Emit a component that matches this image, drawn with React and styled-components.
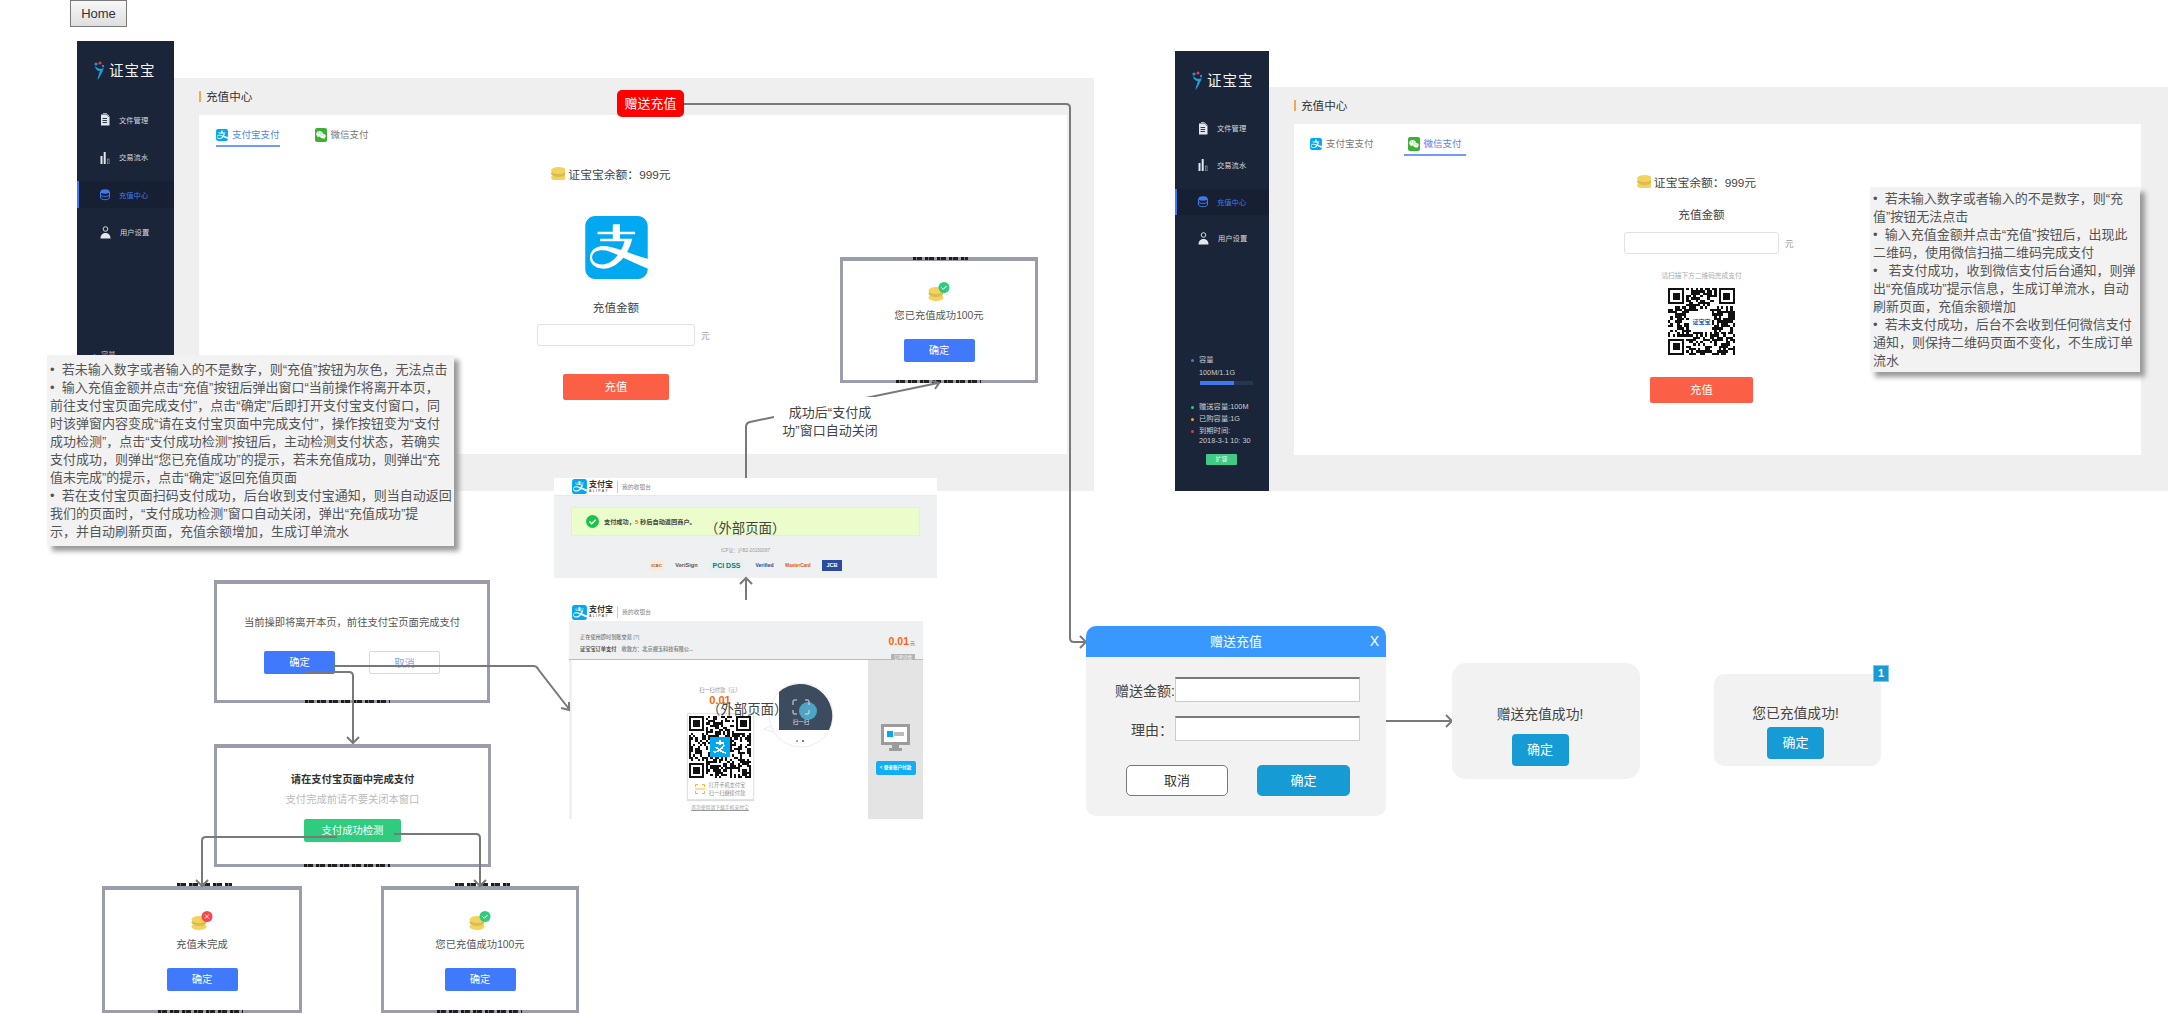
import React from 'react';
import styled, { createGlobalStyle, css } from 'styled-components';
import { SiAlipay } from 'react-icons/si';
import { FaWeixin } from 'react-icons/fa';

const Global = createGlobalStyle`
  html, body { margin: 0; padding: 0; background: #fff; }
  body { font-family: "Liberation Sans", "Noto Sans CJK SC", sans-serif; color: #333; }
  * { box-sizing: border-box; }
`;

const navy = '#1a2539';
const blue = '#4179fd';
const teal = '#169bd5';
const coral = '#fb6046';

// every top level node of the diagram sits at its own place on the canvas
const placed = css`
  position: absolute;
  left: ${p => p.$x}px;
  top: ${p => p.$y}px;
  width: ${p => p.$w}px;
  height: ${p => p.$h}px;
`;

const Canvas = styled.div`
  position: relative;
  width: 2168px;
  height: 1013px;
  overflow: hidden;
`;

const HomeButton = styled.button`
  ${placed}
  font: 13px "Liberation Sans", sans-serif;
  color: #333;
  border: 1px solid #797979;
  background: linear-gradient(#f8f8f8, #dedede);
  padding: 0;
`;

// Screens

const Screen = styled.section`
  ${placed}
  display: flex;
`;

const Sidebar = styled.aside`
  flex: none;
  width: ${p => p.$w}px;
  background: ${navy};
  display: flex;
  flex-direction: column;
`;

const Brand = styled.div`
  display: flex;
  align-items: center;
  gap: 2px;
  height: 18px;
  margin: 21px 0 ${p => p.$below}px 17px;
  color: #f2f4f7;
  font-size: 14.5px;
  letter-spacing: 1px;
  line-height: 18px;
`;

const NavRow = styled.div`
  display: flex;
  align-items: center;
  height: ${p => p.$h}px;
  margin-bottom: ${p => p.$gap}px;
  padding-left: 21px;
  gap: 9px;
  font-size: 7.3px;
  color: ${p => (p.$active ? '#3f78ee' : '#d5d8de')};
  background: ${p => (p.$active ? '#162032' : 'transparent')};
  border-left: 2px solid ${p => (p.$active ? '#3f78ee' : 'transparent')};
`;

const SideFoot = styled.div`
  margin-top: auto;
  padding: 0 0 ${p => p.$pad}px 15px;
  color: #c9ccd3;
  font-size: 7.3px;
  line-height: 10px;
`;

const Bullet = styled.div`
  position: relative;
  padding-left: 9px;
  margin-bottom: ${p => p.$gap || 0}px;
  white-space: nowrap;
  &::before {
    content: '';
    position: absolute;
    left: 1px;
    top: 3.5px;
    width: 3px;
    height: 3px;
    border-radius: 50%;
    background: ${p => p.$color};
  }
`;

const Meter = styled.div`
  width: 53px;
  height: 4px;
  margin: 3px 0 17px 10px;
  background: #263552;
`;

const MeterFill = styled.div`
  height: 100%;
  background: #3f78f0;
`;

const ExpandButton = styled.div`
  width: 31px;
  height: 11px;
  margin: 8px 0 0 16px;
  background: #3fcb85;
  color: #e6f7ee;
  font-size: 6px;
  line-height: 11px;
  text-align: center;
  border-radius: 1px;
`;

const Main = styled.main`
  flex: 1;
  margin-top: ${p => p.$top}px;
  background: #efefef;
  display: flex;
  flex-direction: column;
`;

const PageTitle = styled.h2`
  margin: 13px 0 13px 25px;
  padding-left: 5px;
  border-left: 2px solid #f5a94a;
  font-size: 11.6px;
  font-weight: 400;
  line-height: 11px;
  color: #333;
`;

const Content = styled.div`
  flex: 1;
  margin: 0 ${p => p.$right}px ${p => p.$bottom}px 25px;
  background: #fff;
  display: flex;
  flex-direction: column;
`;

const Tabs = styled.div`
  display: flex;
  gap: ${p => p.$gap}px;
  padding: 13px 0 0 ${p => p.$left}px;
`;

const Tab = styled.div`
  display: flex;
  align-items: flex-start;
  gap: 4px;
  height: 19px;
  padding: 0 ${p => p.$pad}px;
  font-size: 9.5px;
  line-height: 13px;
  color: ${p => (p.$active ? '#4f84f5' : '#777')};
  border-bottom: 2px solid ${p => (p.$active ? '#6f9bfa' : 'transparent')};
`;

const TabIcon = styled.span`
  flex: none;
  width: 12px;
  height: 13px;
  display: flex;
  align-items: center;
  justify-content: center;
  color: ${p => p.$color};
`;

const WeChatBox = styled.span`
  flex: none;
  width: 12px;
  height: 14px;
  border-radius: 2px;
  background: #3cb034;
  color: #fff;
  display: flex;
  align-items: center;
  justify-content: center;
  font-size: 10px;
`;

const Center = styled.div`
  display: flex;
  flex-direction: column;
  align-items: center;
  padding-right: ${p => p.$shift}px;
`;

const Balance = styled.div`
  display: flex;
  align-items: center;
  gap: 3px;
  height: 16px;
  margin-top: ${p => p.$top}px;
  margin-right: 10px;
  font-size: 11.8px;
  color: #444;
  white-space: nowrap;
`;

const AmountLabel = styled.div`
  height: 16px;
  margin-top: ${p => p.$top}px;
  font-size: 11.6px;
  line-height: 16px;
  color: #444;
`;

const AmountRow = styled.div`
  display: flex;
  align-items: center;
  width: ${p => p.$w}px;
  margin-top: ${p => p.$top}px;
`;

const AmountBox = styled.div`
  flex: none;
  width: 100%;
  height: 22px;
  border: 1px solid #dfe3e9;
  border-radius: 3px;
  background: #fff;
`;

const Unit = styled.span`
  flex: none;
  margin-left: 6px;
  font-size: 8.6px;
  color: #999;
`;

const ChargeButton = styled.div`
  width: ${p => p.$w}px;
  height: 26px;
  margin-top: ${p => p.$top}px;
  background: ${coral};
  border-radius: 2px;
  color: #fff;
  font-size: 11.4px;
  line-height: 26px;
  text-align: center;
`;

const ScanHint = styled.div`
  height: 10px;
  margin-top: 17px;
  margin-bottom: 7px;
  font-size: 6.7px;
  line-height: 10px;
  color: #aaa;
`;

const AlipayMark = styled.div`
  margin-top: 35px;
  color: #02a9f1;
  line-height: 0;
  font-size: 63px;
`;

// Dialog frames of the flow

const Frame = styled.div`
  ${placed}
  display: flex;
  flex-direction: column;
  align-items: center;
  background: #fff;
  border: 3px solid #9a9dab;
  border-top-width: 4px;
  padding-top: ${p => p.$pad}px;
`;

const Message = styled.div`
  font-size: ${p => p.$size || 10.3}px;
  line-height: 14px;
  color: ${p => p.$color || '#555'};
  font-weight: ${p => (p.$bold ? 700 : 400)};
  margin-top: ${p => p.$top || 0}px;
  white-space: nowrap;
`;

const ButtonRow = styled.div`
  display: flex;
  gap: 34px;
  margin-top: ${p => p.$top}px;
`;

const FlowButton = styled.div`
  width: ${p => p.$w || 71}px;
  height: 23px;
  margin-top: ${p => p.$top || 0}px;
  border-radius: 2px;
  font-size: 10.3px;
  line-height: 23px;
  text-align: center;
  background: ${p => p.$bg || blue};
  color: ${p => p.$color || '#fff'};
  border: ${p => (p.$outline ? '1px solid #c9d8fb' : 'none')};
`;

// the tips of hidden page text that stick out past a dialog's frame
const Sliver = styled.div`
  ${placed}
  background: repeating-linear-gradient(90deg, #1a1a1a 0 3px, #777 3px 4px, #222 4px 9px, transparent 9px 12px);
`;

// External alipay pages

const External = styled.section`
  ${placed}
  display: flex;
  flex-direction: column;
`;

const PayBrand = styled.div`
  display: flex;
  align-items: center;
  flex: none;
  height: ${p => p.$h}px;
  padding-left: ${p => p.$left}px;
  background: #fff;
  color: #02a9f1;
  font-size: 15px;
`;

const PayWord = styled.div`
  margin-left: 2px;
  color: #333;
  font-size: 8px;
  font-weight: 700;
  line-height: 9px;
  white-space: nowrap;
`;

const PayLatin = styled.div`
  font-size: 3.6px;
  font-weight: 400;
  line-height: 5px;
  letter-spacing: 1.3px;
`;

const PayDesk = styled.div`
  margin-left: 4px;
  padding-left: 4px;
  border-left: 1px solid #ccc;
  color: #888;
  font-size: 5.8px;
  line-height: 12px;
  white-space: nowrap;
`;

const ResultBody = styled.div`
  flex: 1;
  background: #eff0f2;
  display: flex;
  flex-direction: column;
  align-items: center;
  border-top: 1px solid #e8e8e8;
  padding-top: 11px;
`;

const Notice = styled.div`
  display: flex;
  align-items: center;
  gap: 5px;
  width: 349px;
  height: 29px;
  padding-left: 14px;
  background: #eafdca;
  border: 1px solid #e2f4c2;
  font-size: 6.2px;
  font-weight: 700;
  color: #444;
  white-space: nowrap;
`;

const Countdown = styled.b`
  color: #f60;
`;

const Icp = styled.div`
  margin-top: 11px;
  font-size: 4.6px;
  line-height: 7px;
  color: #999;
`;

const TrustRow = styled.div`
  display: flex;
  align-items: center;
  gap: 11px;
  margin-top: 6px;
`;

const TrustBadge = styled.div`
  width: ${p => p.$w}px;
  height: 11px;
  font-size: ${p => p.$size || 5.6}px;
  font-weight: 700;
  line-height: 11px;
  text-align: center;
  white-space: nowrap;
  color: ${p => p.$color};
  background: ${p => p.$bg || 'transparent'};
`;

const Summary = styled.div`
  flex: none;
  height: 39px;
  background: #eff0f2;
  border-bottom: 1px solid #bbb;
  padding: 12px 8px 0 11px;
  display: flex;
  justify-content: space-between;
`;

const SummaryLine = styled.div`
  font-size: ${p => p.$size || 5.2}px;
  font-weight: ${p => (p.$bold ? 700 : 400)};
  line-height: 8px;
  margin-bottom: 4px;
  color: #555;
  white-space: nowrap;
`;

const SummaryLink = styled.span`
  color: #4f8fd8;
`;

const SummaryRight = styled.div`
  display: flex;
  flex-direction: column;
  align-items: flex-end;
  margin-top: 2px;
`;

const Amount = styled.div`
  color: #f60;
  font-size: ${p => p.$size}px;
  font-weight: 700;
  line-height: 12px;
`;

const AmountUnit = styled.span`
  margin-left: 1px;
  color: #777;
  font-size: 5px;
  font-weight: 400;
`;

const DetailButton = styled.div`
  width: 24px;
  height: 8px;
  margin-top: 5px;
  background: #b4b4b4;
  color: #fff;
  font-size: 4.4px;
  line-height: 8px;
  text-align: center;
`;

const PayBody = styled.div`
  flex: 1;
  display: flex;
  background: #f0f0f0;
  padding-left: 3px;
`;

const PayMain = styled.div`
  position: relative;
  flex: 1;
  background: #fff;
  display: flex;
  flex-direction: column;
  align-items: center;
  padding-top: 26px;
`;

const TinyGrey = styled.div`
  font-size: 5.2px;
  line-height: 8px;
  color: #888;
  white-space: nowrap;
`;

const QrCard = styled.div`
  width: 67px;
  height: 87px;
  margin-top: 7px;
  padding: 2px;
  border: 1px solid #e3e3e3;
  box-shadow: 0 1px 1px #ddd;
  background: #fff;
  display: flex;
  flex-direction: column;
  align-items: center;
`;

const ScanTip = styled.div`
  display: flex;
  align-items: center;
  gap: 4px;
  margin-top: 3px;
`;

const GuideLink = styled.div`
  margin-top: 4px;
  font-size: 4.8px;
  line-height: 8px;
  color: #999;
  text-decoration: underline;
  white-space: nowrap;
`;

const BubbleArt = styled.svg`
  position: absolute;
  left: 192px;
  top: 22px;
`;

const PaySide = styled.div`
  flex: none;
  width: 55px;
  background: #e4e4e4;
  display: flex;
  flex-direction: column;
  align-items: center;
  padding-top: 64px;
`;

const LoginButton = styled.div`
  width: 40px;
  height: 14px;
  margin-top: 10px;
  border-radius: 2px;
  background: #10aef5;
  color: #fff;
  font-size: 4.6px;
  font-weight: 700;
  line-height: 14px;
  text-align: center;
  white-space: nowrap;
`;

const OverlayWord = styled.div`
  ${placed}
  font-size: 13.4px;
  line-height: 18px;
  color: #444;
  text-align: center;
  white-space: nowrap;
`;

// Annotations

const Note = styled.div`
  ${placed}
  background: #f2f2f2;
  box-shadow: 5px 5px 5px #999;
  padding: ${p => p.$top}px 2px 0 3px;
  color: #555;
  font-size: 13px;
  line-height: 18px;
`;

const NoteLine = styled.div`
  white-space: pre;
`;

const Flag = styled.div`
  ${placed}
  background: #f00;
  border-radius: 5px;
  color: #fff;
  font-size: 13px;
  line-height: 27px;
  text-align: center;
`;

const FlowLabel = styled.div`
  ${placed}
  background: #fff;
  color: #444;
  font-size: 13px;
  line-height: 18px;
  text-align: center;
  padding-top: 7px;
`;

const Wires = styled.svg`
  position: absolute;
  left: 0;
  top: 0;
  pointer-events: none;
`;

// Gift dialog

const GiftDialog = styled.section`
  ${placed}
  display: flex;
  flex-direction: column;
  background: #f2f2f2;
  border-radius: 10px;
  overflow: hidden;
`;

const GiftHeader = styled.header`
  position: relative;
  height: 31px;
  background: #3898fe;
  color: #fff;
  font-size: 13px;
  line-height: 31px;
  text-align: center;
`;

const GiftClose = styled.span`
  position: absolute;
  right: 7px;
  top: 0;
  font-size: 14px;
`;

const GiftBody = styled.div`
  padding: 20px 26px 0 0;
`;

const Field = styled.div`
  display: flex;
  align-items: center;
  margin-bottom: 14px;
`;

const FieldLabel = styled.label`
  flex: none;
  width: 89px;
  padding-right: ${p => p.$pad}px;
  font-size: 14px;
  color: #444;
  text-align: right;
  white-space: nowrap;
`;

const FieldInput = styled.div`
  flex: 1;
  height: 25px;
  background: #fff;
  border: 1px solid #ccc;
  border-top: 2px solid #797979;
`;

const GiftActions = styled.div`
  display: flex;
  gap: 29px;
  margin-top: 24px;
  padding-left: 40px;
`;

const GiftButton = styled.div`
  width: ${p => p.$w}px;
  height: 31px;
  border-radius: 5px;
  font-size: 13px;
  line-height: ${p => (p.$outline ? 29 : 31)}px;
  text-align: center;
  background: ${p => (p.$outline ? '#fff' : teal)};
  color: ${p => (p.$outline ? '#333' : '#fff')};
  border: ${p => (p.$outline ? '1px solid #797979' : 'none')};
`;

const ToastCard = styled.section`
  ${placed}
  display: flex;
  flex-direction: column;
  align-items: center;
  background: #f2f2f2;
  border-radius: ${p => p.$radius}px;
  padding: ${p => p.$pad}px ${p => p.$shift}px 0 0;
  color: #444;
  font-size: 13.8px;
  line-height: 16px;
`;

const ToastButton = styled.div`
  width: 57px;
  height: 32px;
  margin-top: ${p => p.$top}px;
  border-radius: 4px;
  background: ${teal};
  color: #fff;
  font-size: 13px;
  line-height: 32px;
  text-align: center;
`;

const CornerBadge = styled.div`
  position: absolute;
  right: -8px;
  top: -9px;
  width: 16px;
  height: 17px;
  background: ${teal};
  border: 1px solid #7cc8ea;
  color: #fff;
  font-size: 11px;
  font-weight: 700;
  line-height: 15px;
  text-align: center;
`;

// Drawings

function qrPath(seed, n) {
  let s = seed;
  const next = () => {
    s = (s * 1664525 + 1013904223) % 4294967296;
    return s / 4294967296;
  };
  const inFinder = (x, y) =>
    (x < 8 && y < 8) || (x >= n - 8 && y < 8) || (x < 8 && y >= n - 8);
  let d = '';
  for (let y = 0; y < n; y++) {
    for (let x = 0; x < n; x++) {
      const on = next() > 0.48;
      if (on && !inFinder(x, y)) d += `M${x} ${y}h1v1h-1z`;
    }
  }
  [[0, 0], [n - 7, 0], [0, n - 7]].forEach(([x, y]) => {
    d += `M${x} ${y}h7v7h-7zM${x + 1} ${y + 1}v5h5v-5zM${x + 2} ${y + 2}h3v3h-3z`;
  });
  return d;
}

const QrCode = ({ size, seed, center }) => {
  const n = 29;
  const hole = 9;
  const at = (n - hole) / 2;
  return (
    <svg width={size} height={size} viewBox={`0 0 ${n} ${n}`} shapeRendering="crispEdges" style={{ flex: 'none' }}>
      <path d={qrPath(seed, n)} fill="#111" fillRule="evenodd" />
      <rect x={at} y={at} width={hole} height={hole} fill={center === 'pay' ? '#02a9f1' : '#fff'} />
      {center === 'pay' ? (
        <path d="M12.5 12.5h4M14.5 11v2.5M11.5 17c2-.3 4-1.800 5-3.500M12.500 14.500c1.500 1.500 3.500 2.500 5 3" stroke="#fff" strokeWidth=".8" fill="none" />
      ) : (
        <text x="14.500" y="15.500" fontSize="2.600" fontWeight="700" fill="#2b5fb8" textAnchor="middle">证宝宝</text>
      )}
    </svg>
  );
};

const Coins = ({ status }) => (
  <svg width={status ? 22 : 14} height={status ? 19 : 13} viewBox={status ? '0 0 22 19' : '0 0 14 13'} style={{ flex: 'none' }}>
    <g transform={status ? 'translate(0 4)' : 'translate(-.5 -1)'}>
      <ellipse cx="8" cy="11.500" rx="7.500" ry="3.500" fill="#f3d35c" />
      <ellipse cx="8" cy="7.500" rx="7.500" ry="3.500" fill="#d8bd55" />
      <ellipse cx="8" cy="4.500" rx="7.500" ry="3.500" fill="#f3d35c" />
    </g>
    {status === 'ok' && (
      <g>
        <circle cx="16" cy="5.500" r="5.500" fill="#2fcc7f" />
        <path d="M13.500 5.500l1.800 1.800 3.200-3.300" stroke="#fff" strokeWidth="1" fill="none" />
      </g>
    )}
    {status === 'fail' && (
      <g>
        <circle cx="16" cy="5.500" r="5.500" fill="#f4474f" />
        <path d="M14 3.500l4 4M18 3.500l-4 4" stroke="#fff" strokeWidth="1" fill="none" />
      </g>
    )}
  </svg>
);

const BrandMark = () => (
  <svg width="13" height="20" viewBox="0 0 13 20" style={{ flex: 'none' }}>
    <circle cx="2" cy="3" r="1.600" fill="#2b8fd8" />
    <circle cx="6" cy="2" r="1.600" fill="#d8413f" />
    <circle cx="9" cy="5" r="1.200" fill="#2b8fd8" />
    <path d="M1 5c.5 4 3 5 5 5-1 3-2 5-2.500 9C6 16 8.500 11 10 6.500 8.500 8.500 4.500 8.500 1 5z" fill="#1e9fd8" />
  </svg>
);

const FileIcon = () => (
  <svg width="10" height="13" viewBox="0 0 10 13" fill="#e3e6eb" style={{ flex: 'none' }}>
    <path d="M1 1.500h5.500L9.500 4.500V12a.6.6 0 0 1-.6.600H1z" />
    <path d="M3 .6h3.500l3 3" stroke="#e3e6eb" strokeWidth=".8" fill="none" />
    <path d="M2.500 5.500h4.500M2.500 7.500h4.500M2.500 9.500h4.500" stroke={navy} strokeWidth=".9" />
  </svg>
);

const BarsIcon = () => (
  <svg width="10" height="13" viewBox="0 0 10 13" style={{ flex: 'none' }}>
    <rect x=".5" y="5" width="2" height="8" fill="#e3e6eb" />
    <rect x="3.700" y="1" width="2" height="12" fill="#e3e6eb" />
    <rect x="7.300" y="8" width="1.800" height="5" fill="none" stroke="#aab" strokeWidth=".6" />
  </svg>
);

const StackIcon = () => (
  <svg width="10" height="12" viewBox="0 0 10 12" style={{ flex: 'none' }}>
    <ellipse cx="5" cy="2.500" rx="4.500" ry="2.200" fill="#3f78ee" />
    <path d="M.5 5.500c0 2.600 9 2.600 9 0M.5 8.500c0 2.900 9 2.900 9 0M.5 3v6M9.500 3v6" fill="none" stroke="#3f78ee" strokeWidth="1" />
  </svg>
);

const PersonIcon = () => (
  <svg width="11" height="13" viewBox="0 0 11 13" style={{ flex: 'none' }}>
    <circle cx="5.500" cy="3" r="2.300" fill="none" stroke="#e3e6eb" strokeWidth=".9" />
    <path d="M.5 12.500c0-4 2.500-5.500 5-5.500s5 1.500 5 5.500z" fill="#e3e6eb" />
  </svg>
);

const NAV = [
  { label: '文件管理', Icon: FileIcon },
  { label: '交易流水', Icon: BarsIcon },
  { label: '充值中心', Icon: StackIcon, active: true },
  { label: '用户设置', Icon: PersonIcon },
];

// the first screen's footer lies under the note, only its first line shows
const SideBar = ({ w, rowH, rowGap, below, footPad, compact }) => (
  <Sidebar $w={w}>
    <Brand $below={below}>
      <BrandMark />
      <span>证宝宝</span>
    </Brand>
    {NAV.map(({ label, Icon, active }) => (
      <NavRow key={label} $h={rowH} $gap={rowGap} $active={active}>
        <Icon />
        <span>{label}</span>
      </NavRow>
    ))}
    <SideFoot $pad={footPad}>
      <Bullet $color="#3f78f0" $gap={3}>容量</Bullet>
      {!compact && (
        <>
          <Bullet $color="transparent">100M/1.1G</Bullet>
          <Meter>
            <MeterFill style={{ width: `${(100 / 155) * 100}%` }} />
          </Meter>
          <Bullet $color="#2fcc7f" $gap={2}>赠送容量:100M</Bullet>
          <Bullet $color="#f5a623" $gap={2}>已购容量:1G</Bullet>
          <Bullet $color="#e0393e">到期时间:</Bullet>
          <Bullet $color="transparent">2018-3-1 10: 30</Bullet>
          <ExpandButton>扩容</ExpandButton>
        </>
      )}
    </SideFoot>
  </Sidebar>
);

const PayTabs = ({ active, gap, left, pad }) => (
  <Tabs $gap={gap} $left={left}>
    <Tab $active={active === 'alipay'} $pad={pad}>
      <TabIcon $color="#02a9f1"><SiAlipay size={12} /></TabIcon>
      支付宝支付
    </Tab>
    <Tab $active={active === 'wechat'} $pad={pad}>
      <WeChatBox><FaWeixin /></WeChatBox>
      微信支付
    </Tab>
  </Tabs>
);

const ResultDialog = ({ x, y, w, h, status, text }) => (
  <Frame $x={x} $y={y} $w={w} $h={h} $pad={21}>
    <Coins status={status} />
    <Message $top={8}>{text}</Message>
    <FlowButton $top={16}>确定</FlowButton>
  </Frame>
);

const PayLogo = ({ h, left }) => (
  <PayBrand $h={h} $left={left}>
    <SiAlipay />
    <PayWord>
      支付宝
      <PayLatin>ALIPAY</PayLatin>
    </PayWord>
    <PayDesk>我的收银台</PayDesk>
  </PayBrand>
);

const NOTE_ALIPAY = [
  '•  若未输入数字或者输入的不是数字，则“充值”按钮为灰色，无法点击',
  '•  输入充值金额并点击“充值”按钮后弹出窗口“当前操作将离开本页，',
  '前往支付宝页面完成支付”，点击“确定”后即打开支付宝支付窗口，同',
  '时该弹窗内容变成“请在支付宝页面中完成支付”，操作按钮变为“支付',
  '成功检测”，点击“支付成功检测”按钮后，主动检测支付状态，若确实',
  '支付成功，则弹出“您已充值成功”的提示，若未充值成功，则弹出“充',
  '值未完成”的提示，点击“确定”返回充值页面',
  '•  若在支付宝页面扫码支付成功，后台收到支付宝通知，则当自动返回',
  '我们的页面时，“支付成功检测”窗口自动关闭，弹出“充值成功”提',
  '示，并自动刷新页面，充值余额增加，生成订单流水',
];

const NOTE_WECHAT = [
  '•  若未输入数字或者输入的不是数字，则“充',
  '值”按钮无法点击',
  '•  输入充值金额并点击“充值”按钮后，出现此',
  '二维码，使用微信扫描二维码完成支付',
  '•   若支付成功，收到微信支付后台通知，则弹',
  '出“充值成功”提示信息，生成订单流水，自动',
  '刷新页面，充值余额增加',
  '•  若未支付成功，后台不会收到任何微信支付',
  '通知，则保持二维码页面不变化，不生成订单',
  '流水',
];

const TRUST = [
  { name: 'ICBC', w: 15, size: 4.4, color: '#b5493a', bg: '#f6ecdc' },
  { name: 'VeriSign', w: 23, color: '#555' },
  { name: 'PCI DSS', w: 35, size: 7, color: '#177', bg: '#e6f1f1' },
  { name: 'Verified', w: 19, size: 5, color: '#23479a' },
  { name: 'MasterCard', w: 26, size: 4.6, color: '#d8541e' },
  { name: 'JCB', w: 20, color: '#fff', bg: '#2b4aa0' },
];

const WIRES = [
  'M684 104H1066Q1070 104 1070 108V638Q1070 642 1074 642H1085M1080 636L1086 642L1080 648',
  'M746 478V427Q746 423 750 422L938 383M932 381L939 383L935 389',
  'M332 666H533Q537 666 538 669L569 709M561 708L569 710L569 702',
  'M305 672H349Q353 672 353 676V742M347 737L353 743L359 737',
  'M337 837H206Q202 837 202 841V885M196 880L202 886L208 880',
  'M394 834H476Q480 834 480 838V885M474 880L480 886L486 880',
  'M746 600V579M740 584L746 578L752 584',
  'M1386 721H1451M1446 715L1452 721L1446 727',
];

const SLIVERS = [
  [913, 257, 55],
  [896, 380, 85],
  [305, 700, 85],
  [304, 864, 86],
  [177, 883, 55],
  [455, 883, 55],
  [158, 1010, 85],
  [437, 1010, 85],
];

const App = () => (
  <Canvas>
    <Global />
    <HomeButton $x={70} $y={0} $w={57} $h={27}>Home</HomeButton>

    <Screen $x={77} $y={41} $w={1017} $h={450}>
      <SideBar w={97} rowH={27} rowGap={10.5} below={26} footPad={128} compact />
      <Main $top={37}>
        <PageTitle>充值中心</PageTitle>
        <Content $right={27} $bottom={37}>
          <PayTabs active="alipay" gap={35} left={17} pad={0} />
          <Center $shift={34}>
            <Balance $top={18}><Coins />证宝宝余额：999元</Balance>
            <AlipayMark><SiAlipay /></AlipayMark>
            <AmountLabel $top={21}>充值金额</AmountLabel>
            <AmountRow $w={158} $top={8}>
              <AmountBox />
              <Unit>元</Unit>
            </AmountRow>
            <ChargeButton $w={106} $top={28}>充值</ChargeButton>
          </Center>
        </Content>
      </Main>
    </Screen>

    <Screen $x={1175} $y={51} $w={993} $h={440}>
      <SideBar w={94} rowH={26} rowGap={10.8} below={25} footPad={26} />
      <Main $top={36}>
        <PageTitle>充值中心</PageTitle>
        <Content $right={27} $bottom={36}>
          <PayTabs active="wechat" gap={26} left={12} pad={4} />
          <Center $shift={32}>
            <Balance $top={17}><Coins />证宝宝余额：999元</Balance>
            <AmountLabel $top={18}>充值金额</AmountLabel>
            <AmountRow $w={155} $top={9}>
              <AmountBox />
              <Unit>元</Unit>
            </AmountRow>
            <ScanHint>请扫描下方二维码完成支付</ScanHint>
            <QrCode size={67} seed={77} />
            <ChargeButton $w={103} $top={22}>充值</ChargeButton>
          </Center>
        </Content>
      </Main>
    </Screen>

    <External $x={554} $y={478} $w={383} $h={100}>
      <PayLogo h={17} left={18} />
      <ResultBody>
        <Notice>
          <svg width="13" height="13" viewBox="0 0 13 13">
            <circle cx="6.500" cy="6.500" r="6.500" fill="#1dc24a" />
            <path d="M3.500 6.500l2.200 2.200 4-4" stroke="#fff" strokeWidth="1.500" fill="none" />
          </svg>
          <span>支付成功，<Countdown>5</Countdown> 秒后自动返回商户。</span>
        </Notice>
        <Icp>ICP证：沪B2-20150087</Icp>
        <TrustRow>
          {TRUST.map(t => (
            <TrustBadge key={t.name} $w={t.w} $size={t.size} $color={t.color} $bg={t.bg}>{t.name}</TrustBadge>
          ))}
        </TrustRow>
      </ResultBody>
    </External>

    <External $x={569} $y={603} $w={354} $h={216}>
      <PayLogo h={18} left={3} />
      <Summary>
        <div>
          <SummaryLine>正在使用即时到账交易 <SummaryLink>[?]</SummaryLink></SummaryLine>
          <SummaryLine $bold>证宝宝订单支付　<TinyGrey as="span">收款方：北京视玉科技有限公...</TinyGrey></SummaryLine>
        </div>
        <SummaryRight>
          <Amount $size={10.5}>0.01<AmountUnit>元</AmountUnit></Amount>
          <DetailButton>订单详情</DetailButton>
        </SummaryRight>
      </Summary>
      <PayBody>
        <PayMain>
          <TinyGrey>扫一扫付款（元）</TinyGrey>
          <Amount $size={11}>0.01</Amount>
          <QrCard>
            <QrCode size={62} seed={2024} center="pay" />
            <ScanTip>
              <svg width="10" height="10" viewBox="0 0 10 10" fill="none" stroke="#f5b53c" strokeWidth="1">
                <path d="M.5 3V.5H3M7 .5h2.500V3M.5 7v2.500H3M7 9.500h2.500V7M0 5h10" />
              </svg>
              <TinyGrey as="div">打开手机支付宝<br />扫一扫继续付款</TinyGrey>
            </ScanTip>
          </QrCard>
          <GuideLink>首次使用请下载手机支付宝</GuideLink>
          <BubbleArt width="70" height="70" viewBox="0 0 70 70">
            <path d="M7 44L0 47l9 3z" fill="#fff" stroke="#ddd" strokeWidth=".6" />
            <circle cx="37" cy="33" r="32" fill="#fff" stroke="#eee" />
            <path d="M15 10A32 32 0 0 1 65 48H15z" fill="#3d4b5f" />
            <circle cx="44" cy="29" r="9" fill="#4fa3c3" />
            <path d="M29 23v-4q0-1 1-1h3M41 18h3q1 0 1 1v4M29 28v3q0 1 1 1h3M41 32h3q1 0 1-1v-3" stroke="#dfe3e8" fill="none" />
            <text x="37" y="42" fontSize="5.500" fill="#e6e9ee" textAnchor="middle">扫一扫</text>
            <circle cx="33" cy="59" r="1" fill="#888" />
            <circle cx="39" cy="59" r="1" fill="#555" />
          </BubbleArt>
        </PayMain>
        <PaySide>
          <svg width="29" height="27" viewBox="0 0 29 27">
            <rect width="29" height="21" fill="#9c9c9c" />
            <rect x="3" y="3" width="23" height="15" fill="#fff" />
            <rect x="6" y="7" width="6" height="6" fill="#02a9f1" />
            <rect x="13" y="8" width="10" height="4" fill="#bbb" />
            <path d="M11 21h7v3h3v3H8v-3h3z" fill="#9c9c9c" />
          </svg>
          <LoginButton>&lt; 登录账户付款</LoginButton>
        </PaySide>
      </PayBody>
    </External>

    <OverlayWord $x={705} $y={520} $w={80} $h={18}>（外部页面）</OverlayWord>
    <OverlayWord $x={707} $y={701} $w={80} $h={18}>（外部页面）</OverlayWord>

    <Frame $x={214} $y={580} $w={276} $h={123} $pad={32}>
      <Message>当前操即将离开本页，前往支付宝页面完成支付</Message>
      <ButtonRow $top={21}>
        <FlowButton>确定</FlowButton>
        <FlowButton $outline $bg="#fff" $color="#7da0f8">取消</FlowButton>
      </ButtonRow>
    </Frame>

    <Frame $x={214} $y={744} $w={277} $h={123} $pad={25}>
      <Message $bold $color="#333">请在支付宝页面中完成支付</Message>
      <Message $color="#bbb" $top={6}>支付完成前请不要关闭本窗口</Message>
      <FlowButton $w={97} $bg="#2fcc7f" $top={12}>支付成功检测</FlowButton>
    </Frame>

    <ResultDialog x={840} y={257} w={198} h={126} status="ok" text="您已充值成功100元" />
    <ResultDialog x={102} y={886} w={200} h={127} status="fail" text="充值未完成" />
    <ResultDialog x={381} y={886} w={198} h={127} status="ok" text="您已充值成功100元" />

    {SLIVERS.map(([x, y, w]) => <Sliver key={`${x}-${y}`} $x={x} $y={y} $w={w} $h={3} />)}

    <Wires width="2168" height="1013" viewBox="0 0 2168 1013" fill="none" stroke="#797979" strokeWidth="2">
      {WIRES.map(d => <path key={d} d={d} />)}
    </Wires>

    <FlowLabel $x={774} $y={397} $w={112} $h={48}>
      成功后“支付成<br />功”窗口自动关闭
    </FlowLabel>
    <Flag $x={617} $y={90} $w={67} $h={27}>赠送充值</Flag>

    <Note $x={47} $y={355} $w={407} $h={191} $top={6}>
      {NOTE_ALIPAY.map(line => <NoteLine key={line}>{line}</NoteLine>)}
    </Note>
    <Note $x={1870} $y={187} $w={270} $h={185} $top={3}>
      {NOTE_WECHAT.map(line => <NoteLine key={line}>{line}</NoteLine>)}
    </Note>

    <GiftDialog $x={1086} $y={626} $w={300} $h={190}>
      <GiftHeader>
        赠送充值
        <GiftClose>X</GiftClose>
      </GiftHeader>
      <GiftBody>
        <Field>
          <FieldLabel $pad={0}>赠送金额:</FieldLabel>
          <FieldInput />
        </Field>
        <Field>
          <FieldLabel $pad={2}>理由：</FieldLabel>
          <FieldInput />
        </Field>
        <GiftActions>
          <GiftButton $w={102} $outline>取消</GiftButton>
          <GiftButton $w={93}>确定</GiftButton>
        </GiftActions>
      </GiftBody>
    </GiftDialog>

    <ToastCard $x={1452} $y={663} $w={188} $h={116} $radius={14} $pad={44} $shift={12}>
      赠送充值成功!
      <ToastButton $top={11}>确定</ToastButton>
    </ToastCard>
    <ToastCard $x={1714} $y={674} $w={167} $h={92} $radius={10} $pad={32} $shift={4}>
      您已充值成功!
      <ToastButton $top={5}>确定</ToastButton>
      <CornerBadge>1</CornerBadge>
    </ToastCard>
  </Canvas>
);

export default App;
